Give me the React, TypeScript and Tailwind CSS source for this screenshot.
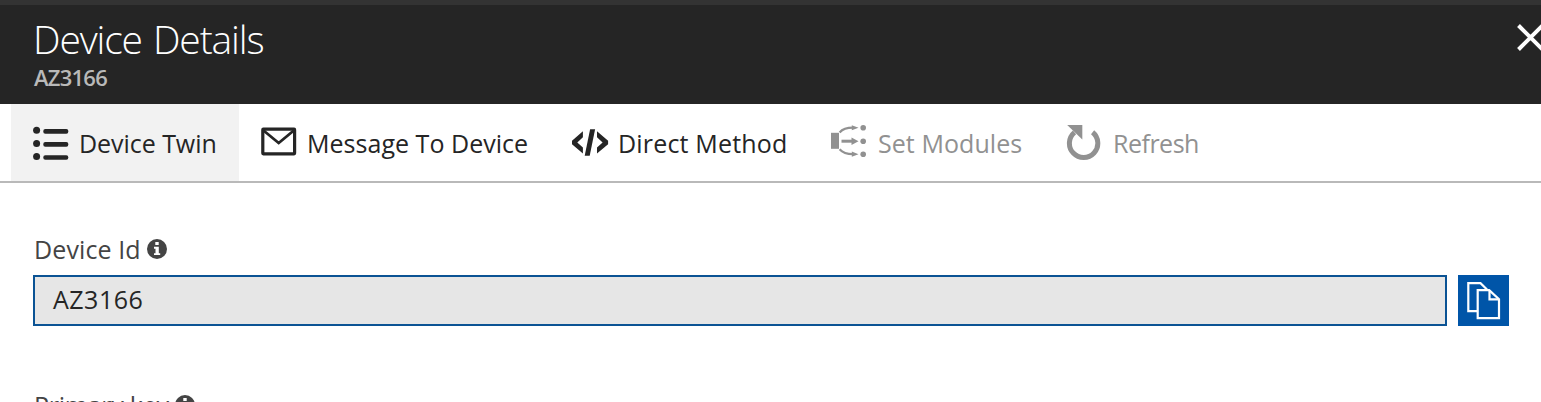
import type { ReactNode } from "react";

function ListIcon() {
  return (
    <svg width="36" height="36" viewBox="0 0 36 36" fill="#252525" className="mb-px shrink-0">
      <circle cx="3.6" cy="6.3" r="3.5" />
      <circle cx="3.6" cy="19.4" r="3.5" />
      <circle cx="3.6" cy="32.4" r="3.5" />
      <rect x="10.3" y="5" width="25" height="4.7" rx="2" />
      <rect x="10.3" y="18.1" width="25" height="4.7" rx="2" />
      <rect x="10.3" y="31.2" width="25" height="4.6" rx="2" />
    </svg>
  );
}

function MailIcon() {
  return (
    <svg width="36" height="36" viewBox="0 0 36 36" fill="none" stroke="#252525" strokeWidth="3.2" className="mb-px shrink-0">
      <rect x="1.8" y="5.2" width="31.8" height="24.6" rx="0.5" />
      <path d="M2.5 6.5 17.7 19 32.8 6.5" strokeWidth="2.8" />
    </svg>
  );
}

function CodeIcon() {
  return (
    <svg width="37" height="36" viewBox="0 0 37 36" fill="#252525" className="mb-px shrink-0">
      <path d="M10.9 7.2v6L5.3 18.4l5.6 5.2v5.8L0 20.2v-3.4z" />
      <path d="M25 7.2v6l5.6 5.2-5.6 5.2v5.8l11.1-9.2v-3.4z" />
      <path d="M18.1 5.2h5L17.7 31.7h-5z" />
    </svg>
  );
}

function ModulesIcon() {
  return (
    <svg width="36" height="36" viewBox="0 0 36 36" fill="#919191" className="mb-px shrink-0">
      <rect x="0" y="8.8" width="8" height="16" />
      <circle cx="32.2" cy="3.7" r="2.8" />
      <circle cx="32.2" cy="17.2" r="2.8" />
      <circle cx="32.2" cy="30.2" r="2.8" />
      <path d="M8.6 8.4C12 4.6 16.5 3.7 22 3.7M8.6 25.3c3.4 3.9 7.9 4.9 13.4 4.9" fill="none" stroke="#919191" strokeWidth="2.2" />
      <path d="M10.5 17.2H21" stroke="#919191" strokeWidth="3" />
      <path d="M20.8 1.2 27.5 3.8 20.8 6.3zM20.5 13.4l7 3.8-7 3.8zM20.8 27.6l6.7 2.6-6.7 2.6z" />
    </svg>
  );
}

function RefreshIcon() {
  return (
    <svg width="35" height="36" viewBox="0 0 35 36" className="mb-px shrink-0">
      <path d="M8.5 8.4A14.2 14.2 0 1 0 26.6 8.3" fill="none" stroke="#919191" strokeWidth="5" />
      <path d="M1.2 1h15.1v14.6z" fill="#919191" />
    </svg>
  );
}

function InfoIcon() {
  return (
    <svg width="20" height="20" viewBox="0 0 20 20" className="shrink-0">
      <circle cx="10" cy="10" r="10" fill="#444" />
      <path d="M8.3 3.1h3.4v2.8H8.3zM7 7.8h4.8v6.4h1.4v1.9H7v-1.9h1.5V9.7H7z" fill="#fff" />
    </svg>
  );
}

function CopyIcon() {
  return (
    <svg width="51" height="51" viewBox="0 0 51 51" fill="none" stroke="#fff" strokeWidth="2.2">
      <path d="M19 36.1H10.3V8.1H22.5L29 14.5" />
      <path d="M19.7 15.2H31.2L41 24.2V43.2H19.7z" fill="#0055a8" />
      <path d="M31.5 15.5V24.3H40.5" />
    </svg>
  );
}

interface CommandProps {
  icon: ReactNode;
  label: string;
  box: string;
  text: string;
}

function Command({ icon, label, box, text }: CommandProps) {
  return (
    <button className={`flex h-full shrink-0 items-center whitespace-nowrap ${box}`}>
      {icon}
      <span className={`pt-px text-[25px] leading-[34px] ${text}`}>{label}</span>
    </button>
  );
}

export default function App() {
  return (
    <div className="h-[402px] w-full overflow-hidden bg-white font-['Open_Sans','Noto_Sans',sans-serif] text-[#252525]">
      <header className="flex h-[104px] justify-between overflow-hidden border-t-[5px] border-[#333] bg-[#252525] pl-[33px]">
        <div className="pt-[10px]">
          <h1 className="whitespace-nowrap text-[39px] font-light leading-[48px] tracking-[-1.12px] [word-spacing:2px] text-white">Device Details</h1>
          <p className="pl-px text-[22px] font-semibold leading-[28px] tracking-[-0.75px] text-[#b9b9b9]">AZ3166</p>
        </div>
        <button aria-label="Close" className="mt-[19px] h-[28px] w-[24px] overflow-hidden">
          <svg width="28" height="28" viewBox="0 0 28 28" stroke="#fff" strokeWidth="4">
            <path d="M1.5 1.5l24 24M1.5 25.5l24-24" />
          </svg>
        </button>
      </header>
      <nav className="flex h-[79px] border-b-2 border-[#b9b9b9] pl-[11px]">
        <Command icon={<ListIcon />} label="Device Twin" box="w-[228px] bg-[#f2f2f2] pl-[22px]" text="ml-[10px] tracking-[-0.05px]" />
        <Command icon={<MailIcon />} label="Message To Device" box="w-[311px] pl-[22px]" text="ml-[10px] tracking-[0.03px]" />
        <Command icon={<CodeIcon />} label="Direct Method" box="w-[259px] pl-[22px]" text="ml-[9px] tracking-[0.18px]" />
        <Command icon={<ModulesIcon />} label="Set Modules" box="w-[235px] pl-[22px]" text="ml-[11px] tracking-[0.06px] text-[#919191]" />
        <Command icon={<RefreshIcon />} label="Refresh" box="pl-[22px]" text="ml-[12px] tracking-[-0.5px] text-[#919191]" />
      </nav>
      <main className="pl-[33px] pr-[32px] pt-[49px] text-[25px] leading-[34px]">
        <label className="flex h-[34px] items-center gap-[7px] text-[#444]">
          <span className="w-[107px] whitespace-nowrap pl-px tracking-[0.1px]">Device Id</span>
          <InfoIcon />
        </label>
        <div className="mt-[9px] flex h-[51px] gap-[11px]">
          <div className="flex-1 border-2 border-[#0b5394] bg-[#e6e6e6] pl-[18px] pt-[5px] tracking-[0.5px]">AZ3166</div>
          <button aria-label="Copy" className="h-[51px] w-[51px] bg-[#0055a8]">
            <CopyIcon />
          </button>
        </div>
        <label className="mt-[62px] flex h-[34px] items-center gap-[7px] text-[#444]">
          <span className="w-[135px] whitespace-nowrap pl-px tracking-[-0.25px]">Primary key</span>
          <InfoIcon />
        </label>
      </main>
    </div>
  );
}
